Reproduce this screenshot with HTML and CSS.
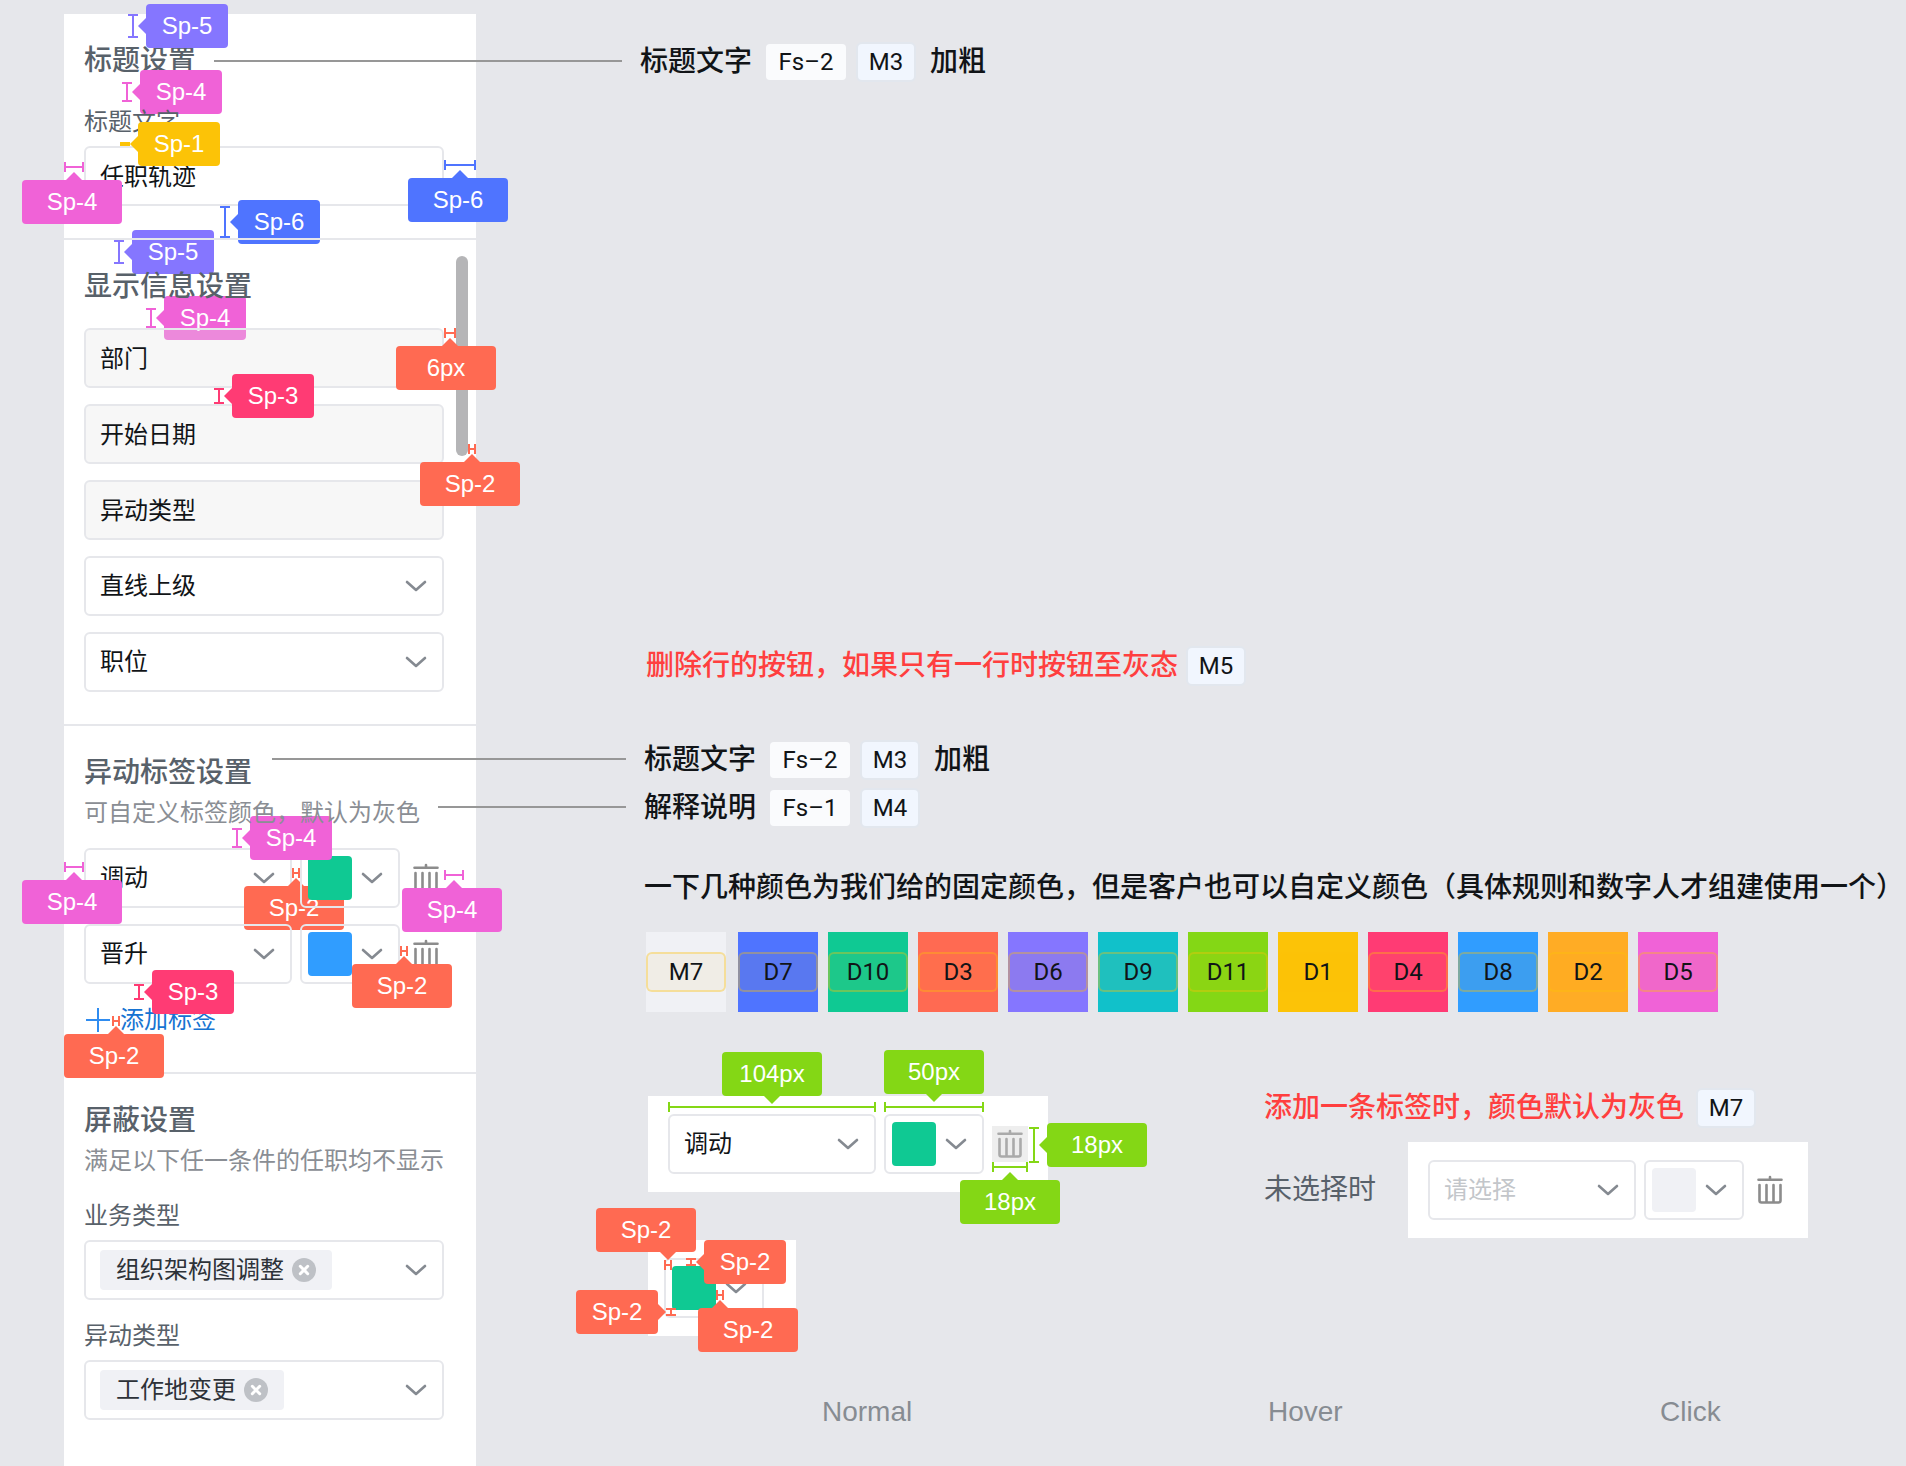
FILE: index.html
```html
<!DOCTYPE html>
<html lang="zh-CN">
<head>
<meta charset="utf-8">
<title>任职轨迹 - 设置面板标注</title>
<link rel="stylesheet" href="styles.css">
</head>
<body>
<svg class="defs" aria-hidden="true">
  <symbol id="chevron" viewBox="0 0 24 24"><path d="M3 8l9 8 9-8" fill="none" stroke="currentColor" stroke-width="2.6" stroke-linecap="round" stroke-linejoin="round"/></symbol>
  <symbol id="trash" viewBox="0 0 36 36"><path d="M6.5 7.7h23M18 5v2M7.5 13v15.5a2 2 0 0 0 2 2h17a2 2 0 0 0 2-2V13M14.5 13v17M21.5 13v17" fill="none" stroke="currentColor" stroke-width="2.6" stroke-linecap="round"/></symbol>
  <symbol id="close" viewBox="0 0 24 24"><circle cx="12" cy="12" r="12" fill="#bec1c6"/><path d="M8.3 8.3l7.4 7.4M15.7 8.3l-7.4 7.4" fill="none" stroke="#fff" stroke-width="3" stroke-linecap="round"/></symbol>
  <symbol id="plus" viewBox="0 0 24 24"><path d="M12 0v24M0 12h24" fill="none" stroke="currentColor" stroke-width="2"/></symbol>
</svg>
<div class="page">
  <aside class="panel">
    <section class="group">
      <h2 class="group-title">标题设置</h2>
      <label class="field-label lift" for="title-text">标题文字</label>
      <input class="field" id="title-text" type="text" value="任职轨迹">
    </section>
    <hr class="divider">
    <section class="group">
      <h2 class="group-title lift">显示信息设置</h2>
      <div class="stack">
        <input class="field locked lift" type="text" value="部门" aria-label="部门" readonly>
        <input class="field locked lift" type="text" value="开始日期" aria-label="开始日期" readonly>
        <input class="field locked lift" type="text" value="异动类型" aria-label="异动类型" readonly>
        <div class="select"><select class="field" aria-label="信息四"><option>直线上级</option></select><svg class="chevron"><use href="#chevron"/></svg></div>
        <div class="select"><select class="field" aria-label="信息五"><option>职位</option></select><svg class="chevron"><use href="#chevron"/></svg></div>
      </div>
    </section>
    <hr class="divider">
    <section class="group">
      <h2 class="group-title tight">异动标签设置</h2>
      <p class="hint top">可自定义标签颜色，默认为灰色</p>
      <div class="stack">
        <div class="tag-row">
          <div class="select"><select class="field" aria-label="标签"><option>调动</option></select><svg class="chevron"><use href="#chevron"/></svg></div>
          <button class="color lift" type="button" aria-label="选择颜色"><span class="chip-color d10"></span><svg class="chevron"><use href="#chevron"/></svg></button>
          <button class="trash" type="button" aria-label="删除"><svg><use href="#trash"/></svg></button>
        </div>
        <div class="tag-row">
          <div class="select lift"><select class="field" aria-label="标签"><option>晋升</option></select><svg class="chevron"><use href="#chevron"/></svg></div>
          <button class="color lift" type="button" aria-label="选择颜色"><span class="chip-color d8"></span><svg class="chevron"><use href="#chevron"/></svg></button>
          <button class="trash" type="button" aria-label="删除"><svg><use href="#trash"/></svg></button>
        </div>
        <button class="add" type="button"><svg><use href="#plus"/></svg>添加标签</button>
      </div>
    </section>
    <hr class="divider">
    <section class="group">
      <h2 class="group-title tight">屏蔽设置</h2>
      <p class="hint">满足以下任一条件的任职均不显示</p>
      <div class="stack">
        <div>
          <span class="field-label" id="biz-label">业务类型</span>
          <div class="field multi" role="group" aria-labelledby="biz-label"><span class="token">组织架构图调整<button type="button" aria-label="移除"><svg><use href="#close"/></svg></button></span><svg class="chevron"><use href="#chevron"/></svg></div>
        </div>
        <div>
          <span class="field-label" id="move-label">异动类型</span>
          <div class="field multi" role="group" aria-labelledby="move-label"><span class="token">工作地变更<button type="button" aria-label="移除"><svg><use href="#close"/></svg></button></span><svg class="chevron"><use href="#chevron"/></svg></div>
        </div>
      </div>
    </section>
  </aside>

  <main class="notes">
    <p class="note">标题文字<span class="pill fs">Fs–2</span><span class="pill">M3</span><span>加粗</span></p>
    <div class="specs">
      <p class="note warn">删除行的按钮，如果只有一行时按钮至灰态<span class="pill">M5</span></p>
      <div class="legend">
        <p class="note">标题文字<span class="pill fs">Fs–2</span><span class="pill">M3</span><span>加粗</span></p>
        <p class="note">解释说明<span class="pill fs">Fs–1</span><span class="pill">M4</span></p>
      </div>
      <p class="rule">一下几种颜色为我们给的固定颜色，但是客户也可以自定义颜色（具体规则和数字人才组建使用一个）</p>
      <ul class="palette">
        <li class="m7"><span>M7</span></li>
        <li class="d7"><span>D7</span></li>
        <li class="d10"><span>D10</span></li>
        <li class="d3"><span>D3</span></li>
        <li class="d6"><span>D6</span></li>
        <li class="d9"><span>D9</span></li>
        <li class="d11"><span>D11</span></li>
        <li class="d1"><span>D1</span></li>
        <li class="d4"><span>D4</span></li>
        <li class="d8"><span>D8</span></li>
        <li class="d2"><span>D2</span></li>
        <li class="d5"><span>D5</span></li>
      </ul>
      <div class="demos">
        <div class="demo-left">
          <div class="card tag-row">
            <div class="select"><select class="field" aria-label="标签"><option>调动</option></select><svg class="chevron"><use href="#chevron"/></svg></div>
            <button class="color" type="button" aria-label="选择颜色"><span class="chip-color d10"></span><svg class="chevron"><use href="#chevron"/></svg></button>
            <button class="trash disabled" type="button" aria-label="删除" disabled><svg><use href="#trash"/></svg></button>
          </div>
          <div class="card small">
            <button class="color" type="button" aria-label="选择颜色"><span class="chip-color d10"></span><svg class="chevron"><use href="#chevron"/></svg></button>
          </div>
        </div>
        <div class="demo-right">
          <p class="note warn">添加一条标签时，颜色默认为灰色<span class="pill">M7</span></p>
          <div class="unset">
            <span>未选择时</span>
            <div class="card tag-row">
              <div class="select"><select class="field empty" aria-label="标签"><option>请选择</option></select><svg class="chevron"><use href="#chevron"/></svg></div>
              <button class="color" type="button" aria-label="选择颜色"><span class="chip-color m7"></span><svg class="chevron"><use href="#chevron"/></svg></button>
              <button class="trash" type="button" aria-label="删除"><svg><use href="#trash"/></svg></button>
            </div>
          </div>
        </div>
      </div>
      <div class="states"><span>Normal</span><span>Hover</span><span>Click</span></div>
    </div>
  </main>

  <div class="scrollbar"></div>
  <div class="leader leader-title"></div>
  <div class="leader leader-tags"></div>
  <div class="leader leader-hint"></div>

  <div class="mark v sp5 a1"><i></i><b>Sp-5</b></div>
  <div class="mark v sp4 under a2"><i></i><b>Sp-4</b></div>
  <div class="mark v sp1 a3"><i></i><b>Sp-1</b></div>
  <div class="mark h inset sp4 a4"><i></i><b>Sp-4</b></div>
  <div class="mark h inset sp6 a5"><i></i><b>Sp-6</b></div>
  <div class="mark v sp6 under a6"><i></i><b>Sp-6</b></div>
  <div class="mark v sp5 under a7"><i></i><b>Sp-5</b></div>
  <div class="mark v sp4 under a8"><i></i><b>Sp-4</b></div>
  <div class="mark h px6 a9"><i></i><b>6px</b></div>
  <div class="mark v sp3 a10"><i></i><b>Sp-3</b></div>
  <div class="mark h inset sp2 a11"><i></i><b>Sp-2</b></div>
  <div class="mark v sp4 a12"><i></i><b>Sp-4</b></div>
  <div class="mark h inset sp4 a13"><i></i><b>Sp-4</b></div>
  <div class="mark h inset sp2 under a14"><i></i><b>Sp-2</b></div>
  <div class="mark h inset sp4 a15"><i></i><b>Sp-4</b></div>
  <div class="mark h inset sp2 a16"><i></i><b>Sp-2</b></div>
  <div class="mark v sp3 a17"><i></i><b>Sp-3</b></div>
  <div class="mark h inset sp2 a18"><i></i><b>Sp-2</b></div>
  <div class="mark h flip px104 a19"><i></i><b>104px</b></div>
  <div class="mark h flip px50 a20"><i></i><b>50px</b></div>
  <div class="mark v px18 a21"><i></i><b>18px</b></div>
  <div class="mark h px18 a22"><i></i><b>18px</b></div>
  <div class="mark h flip sp2 a23"><i></i><b>Sp-2</b></div>
  <div class="mark v sp2 a24"><i></i><b>Sp-2</b></div>
  <div class="mark v flip sp2 a25"><i></i><b>Sp-2</b></div>
  <div class="mark h sp2 a26"><i></i><b>Sp-2</b></div>
</div>
</body>
</html>
```
FILE: styles.css
```css
* { box-sizing: border-box; }

body {
  margin: 0;
  background: #e6e7eb;
  color: #111417;
  font: 400 24px/40px "Liberation Sans", "Noto Sans CJK SC", sans-serif;
}

h2, p, ul { margin: 0; padding: 0; }
button, input, select { font: inherit; color: inherit; margin: 0; }
button { border: 0; padding: 0; background: none; }
svg { display: block; }
.defs { position: absolute; width: 0; height: 0; }

.page {
  position: relative;
  display: flex;
  min-height: 100vh;
  padding: 14px 0 0 64px;
  overflow: hidden;
}

/* Settings panel */
.panel { flex: 0 0 412px; background: #fff; }
.group { padding: 24px 32px 32px 20px; }
.divider {
  position: relative;
  z-index: 2;
  height: 2px;
  margin: 0;
  border: 0;
  background: #e6e7eb;
}
.group-title {
  margin-bottom: 18px;
  color: #58616a;
  font-size: 28px;
  font-weight: 500;
  line-height: 46px;
}
.group-title.tight { margin-bottom: 0; }
.hint { margin-bottom: 18px; color: #8a8e94; line-height: 34px; white-space: nowrap; }
.field-label { display: block; margin-bottom: 4px; color: #58616a; }
.lift { position: relative; z-index: 2; }
.top { position: relative; z-index: 4; }

.stack { display: flex; flex-direction: column; gap: 16px; }
.field {
  display: block;
  width: 100%;
  height: 60px;
  padding: 0 14px;
  border: 2px solid #e6e7eb;
  border-radius: 6px;
  background: transparent;
  appearance: none;
}
input.field { padding-bottom: 4px; }
.locked { background: rgba(229, 229, 229, .3); }
.empty { color: #c3c6ca; }
.select { display: grid; align-items: center; flex: 1; }
.select > * { grid-area: 1 / 1; }
.select > .chevron { justify-self: end; margin-right: 16px; pointer-events: none; }
.chevron { width: 24px; height: 24px; color: #858a91; }

.tag-row { display: flex; align-items: center; gap: 8px; }
.color {
  display: flex;
  align-items: center;
  gap: 8px;
  width: 100px;
  height: 60px;
  padding: 0 6px;
  border: 2px solid #e6e7eb;
  border-radius: 6px;
}
.chip-color { width: 44px; height: 44px; border-radius: 4px; }
.trash { width: 36px; height: 36px; color: #8c8c8c; }
.trash svg { width: 36px; height: 36px; }
.trash.disabled { background: #eee; color: #aaa; }
.add {
  display: flex;
  align-items: center;
  align-self: flex-start;
  gap: 10px;
  height: 40px;
  padding-left: 2px;
  color: #1673d2;
}
.add svg { width: 24px; height: 24px; color: #2f8cf0; }

.multi { display: flex; align-items: center; justify-content: space-between; }
.token {
  display: flex;
  align-items: center;
  gap: 8px;
  padding: 0 16px;
  border-radius: 4px;
  background: #f0f1f5;
  color: #2d3238;
}
.token svg { width: 24px; height: 24px; }

/* Notes beside the panel */
.notes { flex: 1; min-width: 0; padding: 30px 0 34px 164px; white-space: nowrap; }
.note {
  display: flex;
  align-items: center;
  gap: 12px;
  height: 36px;
  font-size: 28px;
  font-weight: 500;
}
.note > :last-child:not(.pill) { margin-left: 4px; }
.pill {
  width: 56px;
  height: 36px;
  border-radius: 4px;
  background: #f1f6fe;
  box-shadow: 0 0 0 2px #e2e7ee;
  color: #111417;
  font: 400 24px/36px Roboto, sans-serif;
  text-align: center;
}
.pill.fs { width: 80px; margin-left: 2px; background: #fafbfd; box-shadow: none; }
.warn { color: #ff3f3f; }
.specs { margin-top: 568px; padding-left: 4px; }
.specs > .warn { gap: 10px; padding-left: 2px; }
.demo-right > .warn { gap: 14px; }
.legend { display: flex; flex-direction: column; gap: 12px; margin-top: 58px; }
.rule { margin-top: 42px; font-size: 28px; font-weight: 500; }

.palette { display: flex; gap: 10px; margin: 24px 0 0 2px; list-style: none; }
.palette li { display: flex; align-items: center; width: 80px; height: 80px; }
.palette li:first-child { margin-right: 2px; }
.palette span {
  width: 80px;
  height: 40px;
  border: 2px solid rgba(252, 193, 8, .35);
  border-radius: 6px;
  background: rgba(252, 193, 8, .06);
  font: 400 24px/36px Roboto, sans-serif;
  text-align: center;
}
.m7 { background: #f0f1f5; }
.d7 { background: #4f74ff; }
.d10 { background: #0fc993; }
.d3 { background: #ff6a52; }
.d6 { background: #8576ff; }
.d9 { background: #11c1ca; }
.d11 { background: #84d715; }
.d1 { background: #fcc307; }
.d4 { background: #ff3b74; }
.d8 { background: #309dff; }
.d2 { background: #ffac25; }
.d5 { background: #f062d7; }

.demos { display: grid; grid-template-columns: 616px 1fr; margin: 78px 0 0 4px; }
.demo-left { display: flex; flex-direction: column; align-items: flex-start; gap: 48px; padding-top: 6px; }
.demo-right { display: flex; flex-direction: column; gap: 16px; }
.card { width: 400px; height: 96px; padding: 0 20px; background: #fff; }
.card.small { display: flex; align-items: center; width: 148px; padding: 0 16px; }
.unset { display: flex; align-items: center; gap: 32px; color: #58616a; font-size: 28px; }
.unset .card { font-size: 24px; color: #111417; }
.states {
  display: grid;
  grid-template-columns: 446px 392px auto;
  margin-top: 56px;
  padding-left: 178px;
  color: #878c92;
  font-size: 28px;
}

/* Overlay: scrollbar, leader lines and spacing marks */
.scrollbar { position: absolute; left: 456px; top: 256px; z-index: 2; width: 12px; height: 200px; border-radius: 6px; background: #b5b5b7; }
.leader { position: absolute; z-index: 2; height: 2px; background: #979797; }
.leader-title { left: 214px; top: 60px; width: 408px; }
.leader-tags { left: 272px; top: 758px; width: 354px; }
.leader-hint { left: 438px; top: 806px; width: 188px; }

.mark { position: absolute; z-index: 3; display: flex; align-items: center; color: var(--tone); --size: 8px; --shift: 0px; }
.mark.under { z-index: 1; }
.mark b {
  position: relative;
  height: 44px;
  border-radius: 4px;
  background: var(--tone);
  color: #fff;
  font-weight: 400;
  line-height: 44px;
  text-align: center;
}
.mark b::before { content: ""; position: absolute; border: 8px solid transparent; }
.mark i { flex: none; border: solid var(--tone); background: linear-gradient(var(--tone), var(--tone)) center no-repeat; }

/* v measures a height: bar, pointer, label in a row */
.v { gap: 8px; height: 44px; }
.v i { width: 10px; height: var(--size); border-width: 2px 0; background-size: 2px 100%; }
.v b { width: 82px; }
.v b::before { right: 100%; top: 14px; border-right-color: var(--tone); border-left-width: 0; }
.v.flip { flex-direction: row-reverse; }
.v.flip b::before { right: auto; left: 100%; border-width: 8px 0 8px 8px; border-color: transparent transparent transparent var(--tone); }

/* h measures a width: bar above the label, --shift moves bar and pointer off its centre */
.h { flex-direction: column; gap: 8px; width: 100px; }
.h i { width: var(--size); height: 10px; margin-left: calc(var(--shift) * 2); border-width: 0 2px; background-size: 100% 2px; }
.h b { width: 100px; }
.h b::before { bottom: 100%; left: calc(42px + var(--shift)); border-bottom-color: var(--tone); border-top-width: 0; }
.h.flip { flex-direction: column-reverse; }
.h.flip b::before { bottom: auto; top: 100%; border-width: 8px 8px 0; border-color: var(--tone) transparent transparent; }

.sp1 { --tone: #fcc307; --size: 4px; }
.sp2 { --tone: #ff6a52; --size: 8px; }
.sp3 { --tone: #ff3b74; --size: 16px; }
.sp4 { --tone: #f062d7; --size: 20px; }
.sp5 { --tone: #8576ff; --size: 24px; }
.sp6 { --tone: #4f74ff; --size: 32px; }
.px6 { --tone: #ff6a52; --size: 12px; }
.px18 { --tone: #84d715; --size: 36px; }
.px50 { --tone: #84d715; --size: 100px; }
.px104 { --tone: #84d715; --size: 208px; }
.inset { --shift: 2px; }

.a1 { left: 128px; top: 4px; }
.a2 { left: 122px; top: 70px; }
.a3 { left: 120px; top: 122px; }
.a4 { left: 22px; top: 162px; }
.a5 { left: 408px; top: 160px; }
.a6 { left: 220px; top: 200px; }
.a7 { left: 114px; top: 230px; }
.a8 { left: 146px; top: 296px; }
.a9 { left: 396px; top: 328px; --shift: 4px; }
.a10 { left: 214px; top: 374px; }
.a11 { left: 420px; top: 444px; }
.a12 { left: 232px; top: 816px; }
.a13 { left: 22px; top: 862px; }
.a14 { left: 244px; top: 868px; }
.a15 { left: 402px; top: 870px; }
.a16 { left: 352px; top: 946px; }
.a17 { left: 134px; top: 970px; }
.a18 { left: 64px; top: 1016px; }
.a19 { left: 722px; top: 1052px; gap: 6px; }
.a20 { left: 884px; top: 1050px; }
.a21 { left: 1029px; top: 1123px; }
.a21 b { width: 100px; }
.a22 { left: 960px; top: 1162px; }
.a23 { left: 596px; top: 1208px; --shift: 22px; }
.a24 { left: 686px; top: 1240px; }
.a25 { left: 576px; top: 1290px; }
.a26 { left: 698px; top: 1290px; --shift: -28px; }
```
